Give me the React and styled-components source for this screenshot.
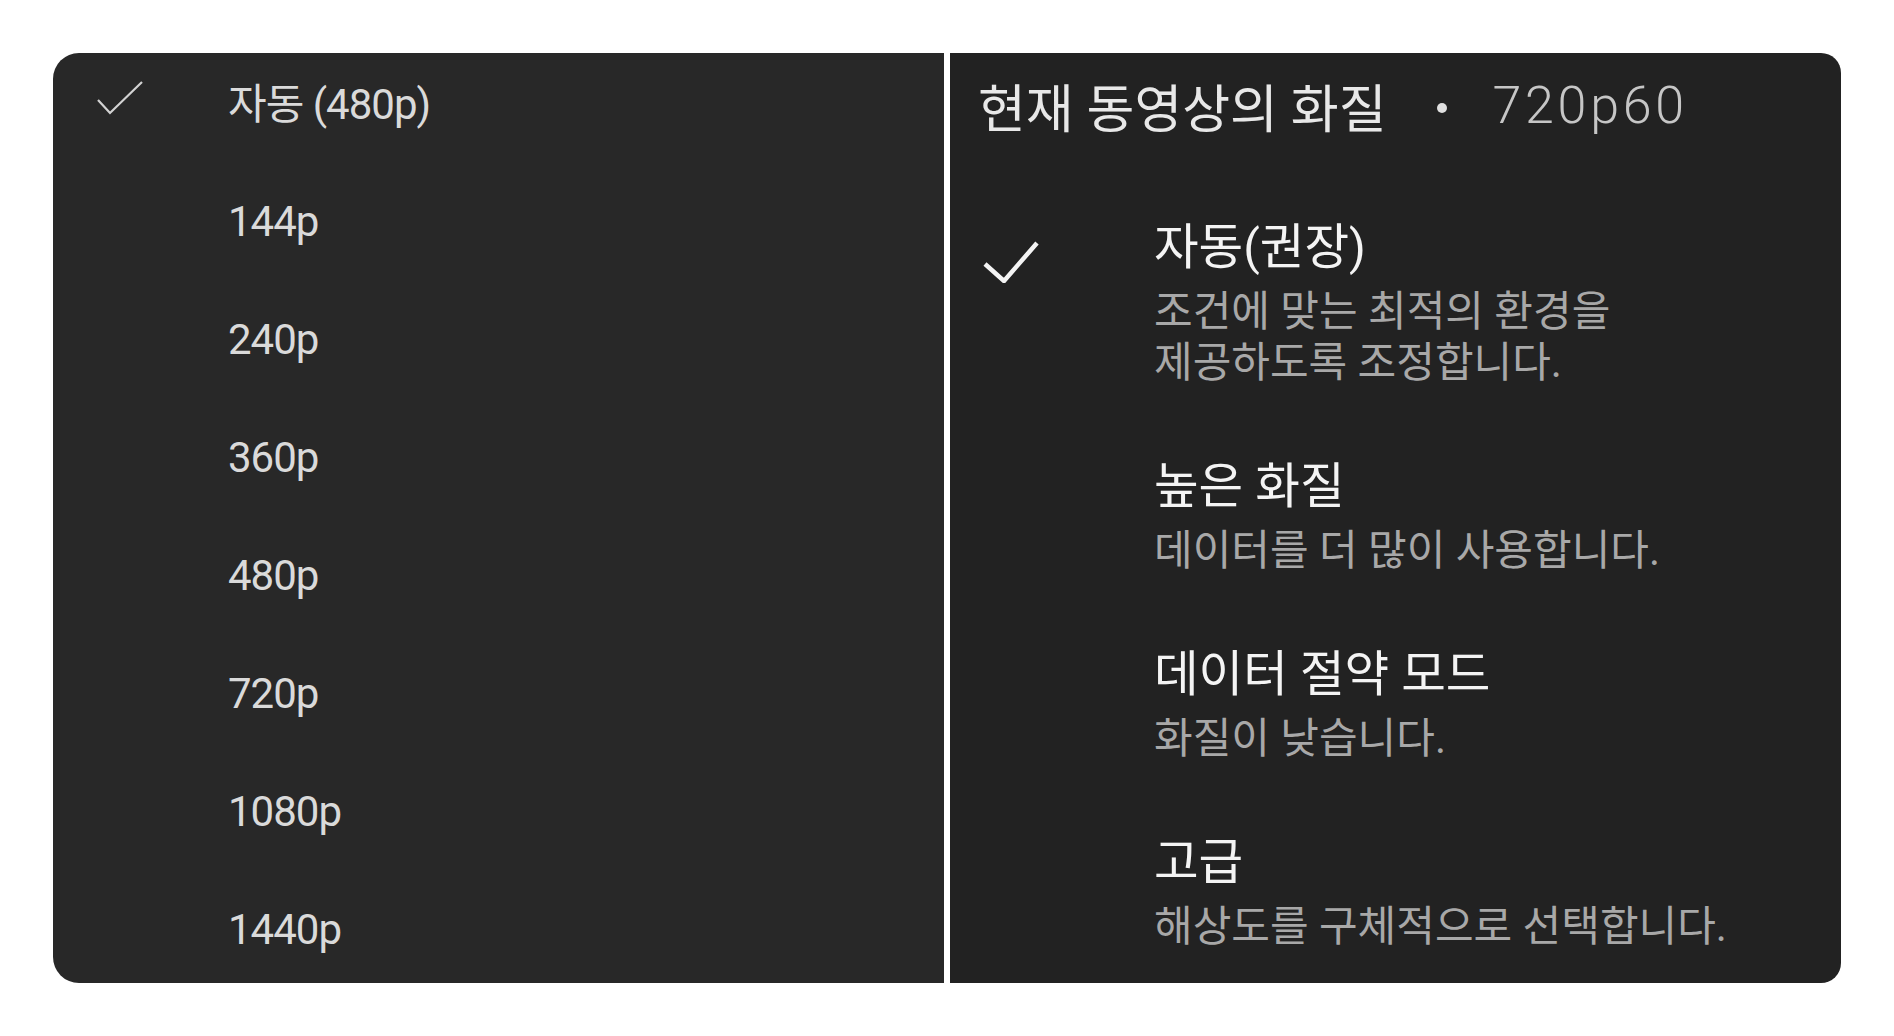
import React from "react"
import styled, { createGlobalStyle } from "styled-components"

const GlobalStyle = createGlobalStyle`
  body {
    margin: 0;
    background: #ffffff;
    font-family: Roboto, "Noto Sans CJK KR", sans-serif;
  }
`

const Page = styled.div`
  display: flex;
  gap: 6px;
  padding: 53px 0 0 53px;
`
const Panel = styled.section`
  width: 891px;
  height: 930px;
  box-sizing: border-box;
  background: ${({ side }) => (side === "left" ? "#282828" : "#222222")};
  border-radius: ${({ side }) => (side === "left" ? "26px 0 0 26px" : "0 20px 20px 0")};
  overflow: hidden;
`
const LeftPanel = styled(Panel)`
  display: flex;
  flex-direction: column;
  justify-content: space-between;
  padding: 0 0 4px 44px;
`
const ResRow = styled.div`
  height: 100px;
  display: grid;
  grid-template-columns: 131px 1fr;
  align-items: center;
`
const ResLabel = styled.span`
  font-size: 42px;
  letter-spacing: -1px;
  color: #dadada;
  white-space: nowrap;
  margin-top: ${({ first }) => (first ? "-6px" : "0")};
`
const ThinCheck = styled.svg`
  width: 46px;
  height: 34px;
  margin-bottom: 7px;
`

const RightPanel = styled(Panel)`
  padding: 20px 0 0 28px;
`
const Header = styled.h2`
  margin: 0;
  display: flex;
  align-items: center;
  height: 64px;
  font-size: 52px;
  font-weight: 400;
  color: #e8e8e8;
  white-space: nowrap;
`
const Dot = styled.span`
  width: 10px;
  height: 10px;
  border-radius: 50%;
  background: #e0e0e0;
  margin: 6px 46px 0 50px;
`
const Current = styled.span`
  font-size: 52px;
  font-weight: 300;
  letter-spacing: 3.7px;
  color: #c6c6c6;
`
const OptionList = styled.div`
  display: flex;
  flex-direction: column;
  gap: 69px;
  margin-top: 81px;
  padding-left: 5px;
`
const Option = styled.div`
  display: grid;
  grid-template-columns: 171px 1fr;
  align-items: start;
`
const BoldCheck = styled.svg`
  width: 56px;
  height: 42px;
  margin-top: 23px;
`
const OptionTitle = styled.div`
  font-size: 48.5px;
  line-height: 60px;
  color: #f4f4f4;
  white-space: nowrap;
`
const OptionDesc = styled.div`
  margin-top: 8px;
  font-size: 42px;
  line-height: 51px;
  color: #a8a8a8;
  white-space: nowrap;
`

const resolutions = ["자동 (480p)", "144p", "240p", "360p", "480p", "720p", "1080p", "1440p"]

const options = [
  { title: "자동(권장)", desc: ["조건에 맞는 최적의 환경을", "제공하도록 조정합니다."], checked: true },
  { title: "높은 화질", desc: ["데이터를 더 많이 사용합니다."] },
  { title: "데이터 절약 모드", desc: ["화질이 낮습니다."] },
  { title: "고급", desc: ["해상도를 구체적으로 선택합니다."] },
]

const App = () => (
  <>
    <GlobalStyle />
    <Page>
      <LeftPanel side="left">
        {resolutions.map((r, i) => (
          <ResRow key={r}>
            <span>
              {i === 0 && (
                <ThinCheck viewBox="0 0 46 34">
                  <polyline points="1,19 13,32 45,1" fill="none" stroke="#d2d2d2" strokeWidth="2.2" />
                </ThinCheck>
              )}
            </span>
            <ResLabel first={i === 0}>{r}</ResLabel>
          </ResRow>
        ))}
      </LeftPanel>
      <RightPanel side="right">
        <Header>
          현재 동영상의 화질
          <Dot />
          <Current>720p60</Current>
        </Header>
        <OptionList>
          {options.map(o => (
            <Option key={o.title}>
              <span>
                {o.checked && (
                  <BoldCheck viewBox="0 0 56 42">
                    <polyline points="2,23 21,40 54,2" fill="none" stroke="#f4f4f4" strokeWidth="4.5" />
                  </BoldCheck>
                )}
              </span>
              <div>
                <OptionTitle>{o.title}</OptionTitle>
                <OptionDesc>
                  {o.desc.map(d => (
                    <div key={d}>{d}</div>
                  ))}
                </OptionDesc>
              </div>
            </Option>
          ))}
        </OptionList>
      </RightPanel>
    </Page>
  </>
)

export default App
